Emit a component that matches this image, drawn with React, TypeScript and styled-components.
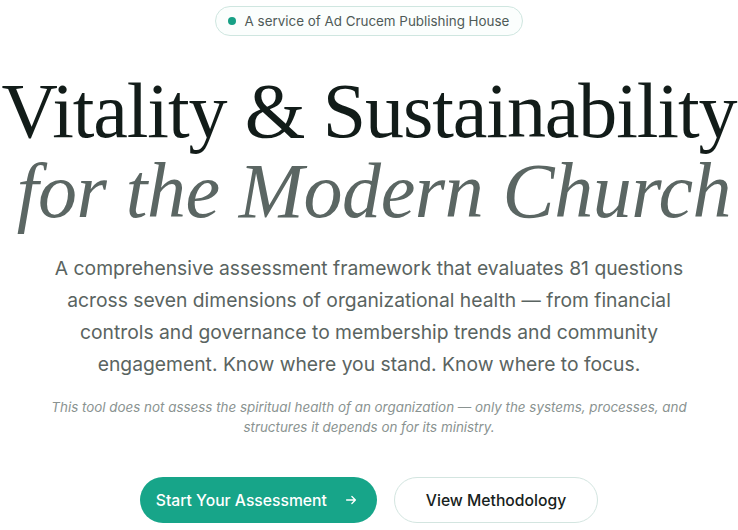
import React from 'react';
import styled, {createGlobalStyle} from 'styled-components';

const GlobalStyle = createGlobalStyle`
  html, body {
    margin: 0;
    padding: 0;
    background: #ffffff;
  }
  body {
    font-family: Inter, "Noto Sans", sans-serif;
  }
`

function App() {
    return (
        <>
            <GlobalStyle/>
            <Hero>
                <Badge>
                    <Dot/>
                    A service of Ad Crucem Publishing House
                </Badge>
                <Title>
                    <TitleLine>Vitality &amp; Sustainability</TitleLine>
                    <TitleLine italic>for the Modern Church</TitleLine>
                </Title>
                <Lead>
                    A comprehensive assessment framework that evaluates 81 questions
                    across seven dimensions of organizational health — from financial
                    controls and governance to membership trends and community
                    engagement. Know where you stand. Know where to focus.
                </Lead>
                <Note>
                    This tool does not assess the spiritual health of an organization — only the systems,
                    processes, and structures it depends on for its ministry.
                </Note>
                <Actions>
                    <PrimaryButton>
                        Start Your Assessment
                        <Arrow viewBox="0 0 16 16">
                            <path d="M3 8h10M9 4l4 4-4 4" fill="none" stroke="currentColor" strokeWidth="1.5"
                                  strokeLinecap="round" strokeLinejoin="round"/>
                        </Arrow>
                    </PrimaryButton>
                    <SecondaryButton>View Methodology</SecondaryButton>
                </Actions>
            </Hero>
        </>
    );
}

const Hero = styled.main`
  display: flex;
  flex-direction: column;
  align-items: center;
  padding-top: 6px;
  text-align: center;
`

const Badge = styled.div`
  display: flex;
  align-items: center;
  gap: 9px;
  height: 30px;
  box-sizing: border-box;
  padding: 0 13px 0 12px;
  border: 1px solid #cfe6e0;
  border-radius: 999px;
  background: #fbfefd;
  color: #4f5b58;
  font-size: 13.4px;
`

const Dot = styled.span`
  width: 8px;
  height: 8px;
  border-radius: 50%;
  background: #16a085;
`

const Title = styled.h1`
  margin: 35px 0 0;
  font-family: "Liberation Serif", "DejaVu Serif", serif;
  font-weight: 400;
  font-size: 78px;
  line-height: 80px;
`

const TitleLine = styled.span<{ italic?: boolean }>`
  display: block;
  white-space: nowrap;
  color: ${p => p.italic ? '#5b6663' : '#121c19'};
  font-style: ${p => p.italic ? 'italic' : 'normal'};
  letter-spacing: ${p => p.italic ? '-0.4px' : '-1.1px'};
  padding-left: ${p => p.italic ? '10px' : '0'};
`

const Lead = styled.p`
  margin: 21px 0 0;
  max-width: 660px;
  color: #5a6461;
  font-size: 19.3px;
  line-height: 32px;
`

const Note = styled.p`
  margin: 17px 0 0;
  max-width: 660px;
  color: #8a9391;
  font-size: 13.4px;
  font-style: italic;
  line-height: 20px;
`

const Actions = styled.div`
  display: flex;
  gap: 17px;
  margin-top: 40px;
`

const PrimaryButton = styled.button`
  display: flex;
  align-items: center;
  gap: 17px;
  height: 46px;
  padding: 0 19px 0 16px;
  border: none;
  border-radius: 999px;
  background: #17a589;
  color: #ffffff;
  font-family: inherit;
  font-size: 15.7px;
  font-weight: 500;
`

const Arrow = styled.svg`
  width: 14px;
  height: 14px;
`

const SecondaryButton = styled.button`
  height: 46px;
  padding: 0 31px;
  border: 1px solid #d3e5e0;
  border-radius: 999px;
  background: #ffffff;
  color: #172220;
  font-family: inherit;
  font-size: 15.7px;
  font-weight: 500;
`

export default App;
